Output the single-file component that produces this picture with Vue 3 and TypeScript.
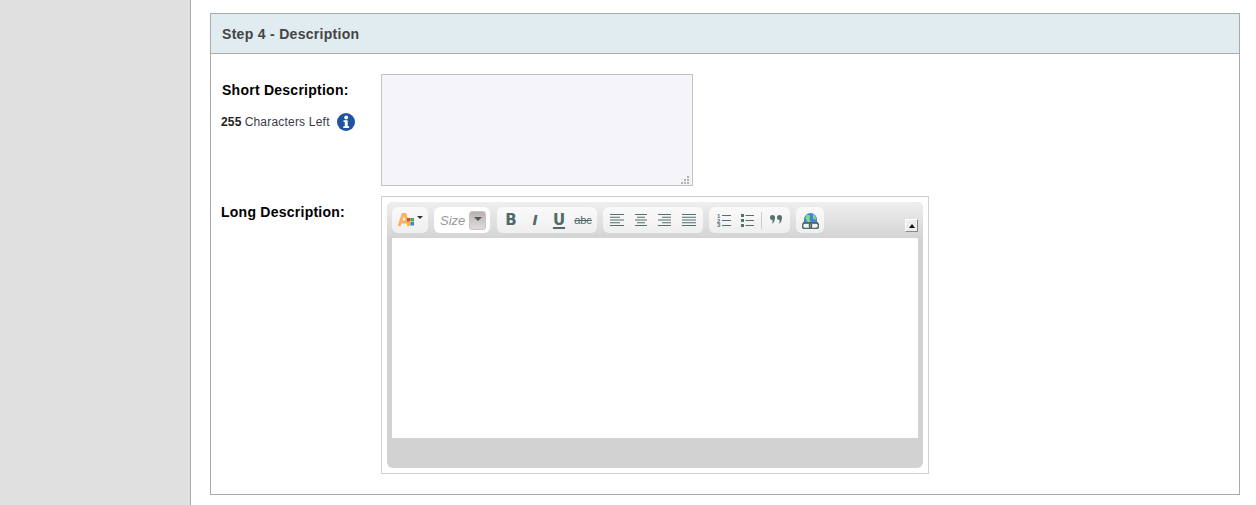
<script setup lang="ts">
const alignLines: Record<string, number[][]> = {
  left: [[0, 14], [0, 10], [0, 14], [0, 10], [0, 14]],
  center: [[1, 12], [3, 8], [1, 12], [3, 8], [1, 12]],
  right: [[0, 13], [4, 9], [0, 13], [4, 9], [0, 13]],
  justify: [[0, 14], [0, 14], [0, 14], [0, 14], [0, 14]],
};
</script>

<template>
  <div class="page">
    <aside class="sidebar"></aside>
    <main class="content">
      <section class="panel">
        <h2 class="panel-title">Step 4 - Description</h2>
        <div class="panel-body">
          <div class="row row-short">
            <div class="label-col">
              <label class="field-label">Short Description:</label>
              <div class="chars">
                <b>255</b> <span>Characters Left</span>
                <svg class="info" width="18" height="18" viewBox="0 0 18 18">
                  <circle cx="9" cy="9" r="9" fill="#1f559f" />
                  <circle cx="9.200" cy="4.500" r="1.900" fill="#fff" />
                  <path d="M6.500 7.300h4.200v6h1.400v1.700H6.300v-1.700h1.500V9H6.500z" fill="#fff" />
                </svg>
              </div>
            </div>
            <div class="short-wrap">
              <textarea class="short-input"></textarea>
              <svg class="grip" width="8" height="8" viewBox="0 0 8 8">
                <path d="M6 0h2v2H6zM3 3h2v2H3zM6 3h2v2H6zM0 6h2v2H0zM3 6h2v2H3zM6 6h2v2H6z" fill="#b4b4b4" />
              </svg>
            </div>
          </div>

          <div class="row">
            <label class="field-label long-label">Long Description:</label>
            <div class="editor-box">
              <div class="editor">
                <div class="toolbar">
                  <div class="group group-color">
                    <svg width="17" height="14" viewBox="0 0 17 14">
                      <path d="M1 13 5 1.500h2L11 13M2.800 9h6.400" fill="none" stroke="#f9b161" stroke-width="2.800" />
                      <rect x="9" y="5" width="3.500" height="3.500" fill="#e8452c" />
                      <rect x="12.500" y="5" width="3.500" height="3.500" fill="#4caf50" />
                      <rect x="9" y="9" width="3.500" height="3.500" fill="#f5c020" />
                      <rect x="12.500" y="9" width="3.500" height="3.500" fill="#3f82e0" />
                    </svg>
                    <i class="caret caret-color"></i>
                  </div>
                  <div class="group group-size">
                    <span class="size-text">Size</span>
                    <span class="size-btn"><i class="caret"></i></span>
                  </div>
                  <div class="group group-format">
                    <span class="fmt fmt-b">B</span>
                    <span class="fmt fmt-i">I</span>
                    <span class="fmt fmt-u">U</span>
                    <span class="fmt fmt-s">abc</span>
                  </div>
                  <div class="group group-align">
                    <svg v-for="(lines, name) in alignLines" :key="name" width="14" height="13" viewBox="0 0 14 13">
                      <rect
                        v-for="(l, i) in lines"
                        :key="i"
                        :x="l[0]"
                        :y="i * 2.750"
                        :width="l[1]"
                        height="1"
                        fill="#567070"
                      />
                    </svg>
                  </div>
                  <div class="group group-list">
                    <svg width="14" height="14" viewBox="0 0 14 14">
                      <path d="M5 2.500h9M5 7.500h9M5 12.500h9" stroke="#567070" stroke-width="1" />
                      <text x="0" y="4.500" class="num">1</text>
                      <text x="0" y="9.500" class="num">2</text>
                      <text x="0" y="14" class="num">3</text>
                    </svg>
                    <svg width="13" height="13" viewBox="0 0 13 13">
                      <path d="M0 0h3v3H0zM0 5h3v3H0zM0 10h3v3H0z" fill="#567070" />
                      <path d="M4.500 1.500H13M4.500 6.500H13M4.500 11.500H13" stroke="#567070" stroke-width="1" />
                    </svg>
                    <i class="sep"></i>
                    <svg class="quote" width="12" height="9" viewBox="0 0 12 9">
                      <path d="M0 2.500a2.500 2.500 0 0 1 5 0C5 5 4 7.500 2 9c.5-1.500.6-2.500.5-4A2.500 2.500 0 0 1 0 2.500zM7 2.500a2.500 2.500 0 0 1 5 0c0 2.500-1 5-3 6.500.5-1.500.6-2.500.5-4A2.500 2.500 0 0 1 7 2.500z" fill="#567070" />
                    </svg>
                  </div>
                  <div class="group group-link">
                    <svg width="17" height="17" viewBox="0 0 17 17">
                      <path d="M2 11V7.500a6.500 6.500 0 0 1 13 0V11z" fill="#4a80d8" />
                      <path d="M4.500 2.500 8 3.500 7.500 7 8.500 10 5.500 10 3.500 6zM11 2l2.500 2.500L14 8l-3-1.500z" fill="#7ee07e" />
                      <rect x="0.500" y="11" width="9" height="5.500" rx="2.500" fill="none" stroke="#4f6a6a" stroke-width="1.600" />
                      <rect x="7.500" y="11" width="9" height="5.500" rx="2.500" fill="none" stroke="#4f6a6a" stroke-width="1.600" />
                      <path d="M1 10h15v1.500H1z" fill="#4f6a6a" />
                    </svg>
                  </div>
                  <button class="collapse" type="button"><i class="caret-up"></i></button>
                </div>
                <div class="edit-area"></div>
                <div class="status"></div>
              </div>
            </div>
          </div>
        </div>
      </section>
    </main>
  </div>
</template>

<style>
html,
body {
  margin: 0;
  background: #fff;
}
</style>

<style scoped>
.page {
  display: flex;
  height: 505px;
  overflow: hidden;
  font-family: "Liberation Sans", Arial, sans-serif;
}

.sidebar {
  width: 190px;
  flex: none;
  background: #e0e0e0;
  border-right: 1px solid #aaa;
}

.content {
  flex: 1;
  padding: 13px 16px 0 19px;
}

.panel {
  border: 1px solid #aaa;
  height: 480px;
}

.panel-title {
  margin: 0;
  height: 38px;
  padding: 1px 0 0 11px;
  line-height: 39px;
  background: #e0ecf0;
  border-bottom: 1px solid #aaa;
  font-size: 14px;
  font-weight: bold;
  color: #444;
  letter-spacing: 0.3px;
}

.panel-body {
  padding: 20px 0 0 10px;
}

.row {
  display: flex;
  align-items: flex-start;
}

.row-short {
  margin-bottom: 10px;
}

.label-col {
  width: 160px;
  flex: none;
}

.field-label {
  display: block;
  padding-top: 8px;
  padding-left: 1px;
  font-size: 14px;
  line-height: 16px;
  font-weight: bold;
  color: #000;
  letter-spacing: 0.25px;
}

.long-label {
  width: 160px;
  flex: none;
  padding-left: 0;
}

.chars {
  display: flex;
  align-items: center;
  margin-top: 14px;
  font-size: 12px;
  height: 20px;
  color: #3a3a4a;
  letter-spacing: 0.2px;
}

.chars b {
  color: #222;
  margin-right: 3px;
}

.info {
  margin-left: 7px;
}

.short-wrap {
  position: relative;
  height: 112px;
}

.short-input {
  display: block;
  box-sizing: border-box;
  width: 312px;
  height: 112px;
  margin: 0;
  resize: none;
  background: #f4f4f9;
  border: 1px solid #c4c4c4;
}

.grip {
  position: absolute;
  right: 4px;
  bottom: 2px;
}

.editor-box {
  box-sizing: border-box;
  width: 548px;
  height: 278px;
  padding: 5px;
  border: 1px solid #d0d0d0;
}

.editor {
  height: 266px;
  border-radius: 6px;
  background: #d2d2d2;
  display: flex;
  flex-direction: column;
  overflow: hidden;
}

.toolbar {
  height: 36px;
  flex: none;
  box-sizing: border-box;
  padding: 5px 5px 0;
  display: flex;
  align-items: flex-start;
  gap: 6px;
  background: linear-gradient(#efefef, #d4d4d4);
}

.group {
  height: 26px;
  box-sizing: border-box;
  border-radius: 6px;
  background: linear-gradient(#fafafa, #efefef);
  display: flex;
  align-items: center;
}

.group-color {
  width: 36px;
  padding-left: 6px;
  gap: 1px;
}

.caret {
  width: 0;
  height: 0;
  border: 3px solid transparent;
  border-top: 3px solid #333;
  border-bottom: 0;
}

.caret-color {
  margin: 0 0 5px 1px;
}

.group-size {
  width: 56px;
  background: #fff;
  padding-left: 6px;
  margin-right: 1px;
}

.size-text {
  font-size: 13px;
  font-style: italic;
  color: #999;
  width: 29px;
}

.size-btn {
  width: 17px;
  height: 19px;
  border-radius: 3px;
  background: linear-gradient(#bbb0b0, #e0dcdc);
  border: 1px solid #c8c4c4;
  box-sizing: border-box;
  display: flex;
  align-items: center;
  justify-content: center;
}

.size-btn .caret {
  border-top-color: #555;
  border-width: 4px;
  border-bottom: 0;
  margin-bottom: 3px;
}

.group-format {
  width: 100px;
  padding-left: 2px;
}

.fmt {
  width: 24px;
  text-align: center;
  color: #4f6a6a;
  font-family: "DejaVu Sans", sans-serif;
  font-size: 15px;
  line-height: 18px;
  font-weight: bold;
}

.fmt-i {
  font-size: 14px;
  font-style: italic;
}

.fmt-u {
  text-decoration: underline;
  text-decoration-thickness: 2px;
  text-underline-offset: 2px;
}

.fmt-s {
  font-family: "Liberation Sans", sans-serif;
  font-size: 11px;
  font-weight: normal;
  text-decoration: line-through;
}

.group-align {
  width: 100px;
  padding-left: 7px;
  gap: 10px;
}

.group-list {
  width: 81px;
  padding-left: 8px;
  gap: 10px;
}

.num {
  font-size: 6px;
  font-family: "Liberation Sans", sans-serif;
  font-weight: bold;
  fill: #567070;
}

.sep {
  width: 1px;
  height: 17px;
  background: #ccc;
  margin-left: -3px;
}

.quote {
  margin-left: -2px;
  margin-bottom: 1px;
}

.group-link {
  width: 28px;
  justify-content: center;
}

.collapse {
  width: 13px;
  height: 13px;
  margin: 12px 0 0 auto;
  padding: 0;
  box-sizing: border-box;
  background: #eee;
  border: 1px solid;
  border-color: #fff #888 #888 #fff;
  display: flex;
  align-items: center;
  justify-content: center;
}

.caret-up {
  width: 0;
  height: 0;
  border: 3.500px solid transparent;
  border-bottom: 4px solid #111;
  border-top: 0;
}

.edit-area {
  height: 200px;
  flex: none;
  margin: 0 5px;
  background: #fff;
}

.status {
  flex: 1;
}
</style>
